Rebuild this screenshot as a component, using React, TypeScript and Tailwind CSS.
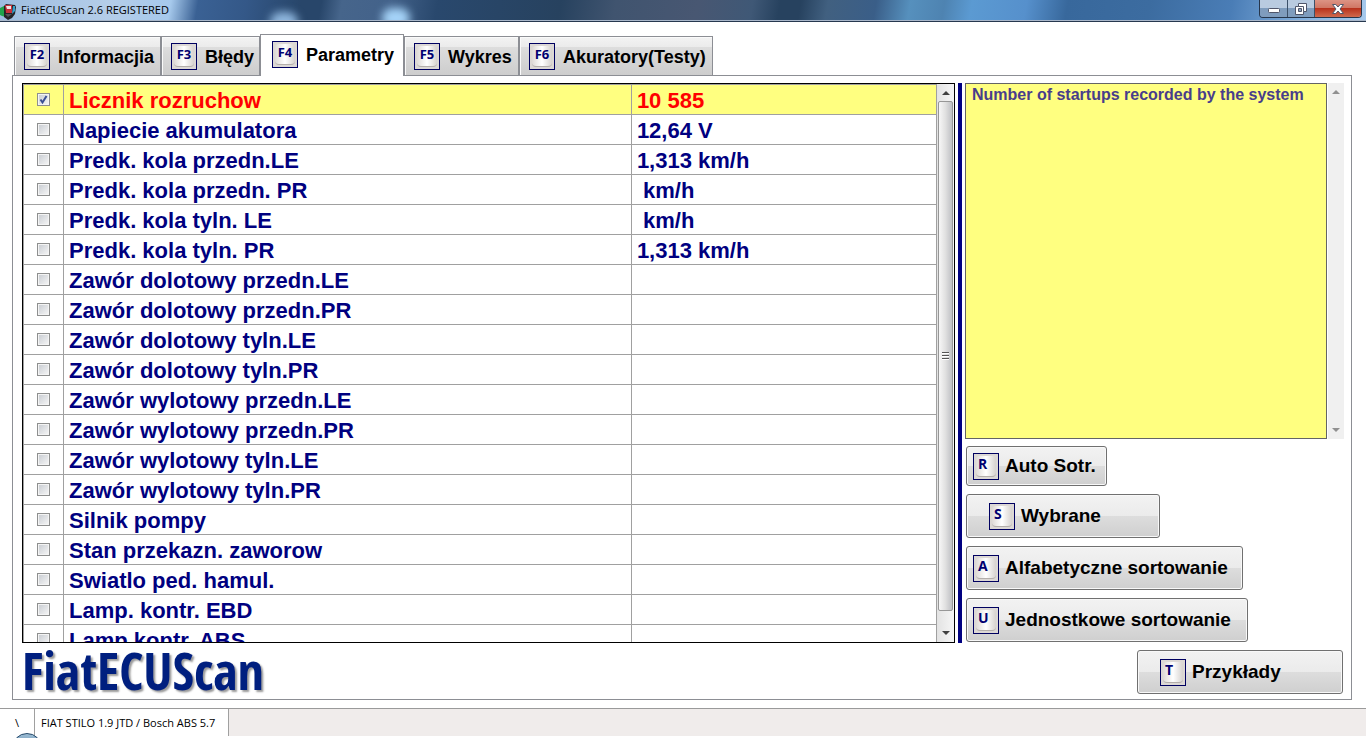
import { useState } from 'react'
import clsx from 'clsx'

const tabs = [
  { key: 'F2', label: 'Informacjia', width: 'w-[147px]' },
  { key: 'F3', label: 'Błędy', width: 'w-[99px]' },
  { key: 'F4', label: 'Parametry', width: 'w-[144px]' },
  { key: 'F5', label: 'Wykres', width: 'w-[115px]' },
  { key: 'F6', label: 'Akuratory(Testy)', width: 'w-[194px]' },
]

const parameters = [
  { name: 'Licznik rozruchow', value: '10 585' },
  { name: 'Napiecie akumulatora', value: '12,64 V' },
  { name: 'Predk. kola przedn.LE', value: '1,313 km/h' },
  { name: 'Predk. kola przedn. PR', value: ' km/h' },
  { name: 'Predk. kola tyln. LE', value: ' km/h' },
  { name: 'Predk. kola tyln. PR', value: '1,313 km/h' },
  { name: 'Zawór dolotowy przedn.LE', value: '' },
  { name: 'Zawór dolotowy przedn.PR', value: '' },
  { name: 'Zawór dolotowy tyln.LE', value: '' },
  { name: 'Zawór dolotowy tyln.PR', value: '' },
  { name: 'Zawór wylotowy przedn.LE', value: '' },
  { name: 'Zawór wylotowy przedn.PR', value: '' },
  { name: 'Zawór wylotowy tyln.LE', value: '' },
  { name: 'Zawór wylotowy tyln.PR', value: '' },
  { name: 'Silnik pompy', value: '' },
  { name: 'Stan przekazn. zaworow', value: '' },
  { name: 'Swiatlo ped. hamul.', value: '' },
  { name: 'Lamp. kontr. EBD', value: '' },
  { name: 'Lamp kontr. ABS', value: '' },
]

const sortButtons = [
  { key: 'R', label: 'Auto Sotr.', size: 'h-10 w-[141px] pl-1.5' },
  { key: 'S', label: 'Wybrane', size: 'h-11 w-[194px] pl-[22px]' },
  { key: 'A', label: 'Alfabetyczne sortowanie', size: 'h-11 w-[277px] pl-1.5' },
  { key: 'U', label: 'Jednostkowe sortowanie', size: 'h-11 w-[282px] pl-1.5' },
]

function KeyCap({ children }: { children: string }) {
  return (
    <span className="flex h-[27px] w-[26px] shrink-0 border border-[#000060] bg-[#dcd8d5] p-0.5">
      <span
        className={clsx(
          'flex-1 rounded-sm border-b border-[#b3aeab] bg-linear-to-r from-[#dedad7] via-white to-[#d6d2cf] font-["Open_Sans",sans-serif] font-bold leading-4 text-[#000070]',
          children.length > 1 ? 'text-center text-[13px]' : 'pl-0.5 text-left text-sm'
        )}
      >
        {children}
      </span>
    </span>
  )
}

function KeyButton({ hotkey, label, size }: { hotkey: string; label: string; size: string }) {
  return (
    <button
      type="button"
      className={clsx(
        'flex shrink-0 items-center gap-1.5 whitespace-nowrap rounded-[3px] border border-[#707070] bg-[linear-gradient(#f2f2f2,#ebebeb_50%,#dddddd_50%,#cfcfcf)] text-[19px] font-bold text-black shadow-[inset_0_0_0_1px_#f8f8f8]',
        size
      )}
    >
      <KeyCap>{hotkey}</KeyCap>
      {label}
    </button>
  )
}

function Arrow({ up, muted }: { up?: boolean; muted?: boolean }) {
  return (
    <svg width="8" height="4" viewBox="0 0 8 4" className="shrink-0" aria-hidden="true">
      <path d={up ? 'M0 4 4 0 8 4Z' : 'M0 0 4 4 8 0Z'} fill={muted ? '#909090' : '#404040'} />
    </svg>
  )
}

function AppIcon() {
  return (
    <svg width="17" height="18" viewBox="0 0 17 18" aria-hidden="true">
      <path d="M0 6 4 4 7 9 6 15 2 14 0 13Z" fill="#1fa34c" />
      <path d="M4 4 6 2 15 3 16 5 15 12 12 16 8 18 4 15Z" fill="#252429" />
      <path d="M5 3 12 3 12 11 6 11Z" fill="#c8303a" />
      <path d="M6 4 11 4 11 7 7 7Z" fill="#eee5e5" />
      <path d="M13 4 15 4 15 9 12 12Z" fill="#35a0cc" />
      <path d="M5 12 12 12 8 15Z" fill="#55555c" />
    </svg>
  )
}

function TitleBar() {
  return (
    <header className="relative flex h-[22px] shrink-0 justify-between overflow-hidden border-b border-[#27384f]">
      {/* Blurred desktop behind the glass */}
      <div className="absolute inset-0 bg-[linear-gradient(100deg,#9dbde0_0%,#b4cde8_8%,#a6c9ec_12.5%,#3a6194_14.5%,#345888_18%,#28466a_22%,#28466a_23.5%,#46658b_25%,#43628a_28.5%,#29486d_32%,#27425f_41%,#40546f_45%,#485772_51%,#3f5876_55%,#27425f_57%,#27425f_58.5%,#416080_60.5%,#3a5e88_64%,#5690bd_66.5%,#4e83b1_69%,#5b9ad2_71%,#5690cc_75%,#38689c_78%,#3c6ca0_84%,#4a7db6_90%,#89b5e2_96%,#a7c9ec_100%)]" />
      <div className="absolute top-3 left-[270px] h-5 w-7 rounded-full bg-[#8eb6dd] blur-xs" />
      <div className="absolute top-2 left-[382px] h-5 w-7 rounded-full bg-[#a5d3f8] blur-xs" />
      <div className="absolute inset-x-0 bottom-0 h-px bg-[#a9b7ca]" />

      <div className="relative flex items-center gap-1">
        <AppIcon />
        <h1 className='font-["Open_Sans",sans-serif] text-[11px] text-black'>FiatECUScan 2.6 REGISTERED</h1>
      </div>

      <div className="relative mr-1 flex h-[18px] overflow-hidden rounded-b border border-t-0 border-[#26364c]">
        <button
          type="button"
          aria-label="Minimize"
          className="flex w-7 items-center justify-center border-r border-[#3b5069] bg-linear-to-b from-[#b9cbe0] from-50% to-[#7f9cbd] to-50%"
        >
          <svg width="12" height="6" viewBox="0 0 12 6" className="mt-1" aria-hidden="true">
            <rect x=".5" y=".5" width="11" height="4" rx="1" fill="#fff" stroke="#50566a" />
          </svg>
        </button>
        <button
          type="button"
          aria-label="Restore"
          className="flex w-[27px] items-center justify-center border-r border-[#3b5069] bg-linear-to-b from-[#b9cbe0] from-50% to-[#7f9cbd] to-50%"
        >
          <svg width="12" height="12" viewBox="0 0 12 12" fill="none" aria-hidden="true">
            <path d="M3.5.5h8v8h-3v3h-8v-8h3z" fill="#fff" stroke="#50566a" />
            <path d="M3.5 3.5h5v5" stroke="#50566a" />
            <path d="M3.5 5.5h3v3h-3z" fill="#8fa5c0" stroke="#50566a" />
          </svg>
        </button>
        <button
          type="button"
          aria-label="Close"
          className="flex w-[46px] items-center justify-center bg-[linear-gradient(#dc9384,#cf7462_50%,#b8321d_50%,#cf6a4e)]"
        >
          <svg width="12" height="10" viewBox="0 0 12 10" aria-hidden="true">
            <path d="M.5.5h3.3L6 3 8.2.5h3.3L8 5l3.5 4.5H8.2L6 7 3.8 9.5H.5L4 5z" fill="#fff" stroke="#50566a" />
          </svg>
        </button>
      </div>
    </header>
  )
}

function ParameterTable() {
  const [checked, setChecked] = useState([0])

  const toggle = (i: number) =>
    setChecked((prev) => (prev.includes(i) ? prev.filter((n) => n !== i) : [...prev, i]))

  return (
    <div className="flex min-w-0 flex-1 overflow-hidden border border-black">
      <div className="min-w-0 flex-1 overflow-hidden">
        <table className="w-full table-fixed border-collapse text-[22px] leading-[27px] font-bold text-[#000080]">
          <colgroup>
            <col className="w-10" />
            <col className="w-[62.2%]" />
            <col />
          </colgroup>
          <tbody>
            {parameters.map((p, i) => (
              <tr
                key={p.name}
                className={clsx('h-[30px]', i === 0 && 'bg-[#ffff80] text-[#ff0000]')}
              >
                <td className="border border-[#a0a0a0] p-0">
                  <span className="relative mx-auto block size-[13px]">
                    <input
                      type="checkbox"
                      id={`param-${i}`}
                      checked={checked.includes(i)}
                      onChange={() => toggle(i)}
                      className="peer block size-[13px] appearance-none border border-[#8e8f8f] bg-linear-to-br from-[#c6cad0] to-[#f8f8f8] shadow-[inset_0_0_0_1px_#f4f4f4]"
                    />
                    <svg
                      viewBox="0 0 13 13"
                      className="pointer-events-none invisible absolute inset-0 size-[13px] peer-checked:visible"
                      aria-hidden="true"
                    >
                      <path d="M3.5 6.5 5.5 9.5 9.5 3" fill="none" stroke="#3a4f94" strokeWidth="2" />
                    </svg>
                  </span>
                </td>
                <td className="border border-[#a0a0a0] p-0 pt-0.5 pl-[5px]">
                  <label htmlFor={`param-${i}`} className="block whitespace-nowrap">{p.name}</label>
                </td>
                <td className="border border-[#a0a0a0] p-0 pt-0.5 pl-[5px] whitespace-pre">{p.value}</td>
              </tr>
            ))}
          </tbody>
        </table>
      </div>

      {/* Scrollbar */}
      <div className="flex w-[17px] shrink-0 flex-col items-center bg-linear-to-r from-[#e3e3e3] to-[#f6f6f6]">
        <div className="flex h-[17px] items-center"><Arrow up /></div>
        <div className="flex w-[15px] flex-1 flex-col items-center justify-center gap-px rounded-xs border border-[#979797] bg-linear-to-r from-[#f7f7f7] via-[#e0e0e0] to-[#bfc0c4]">
          <span className="h-0.5 w-[7px] border-t border-[#555] bg-white" />
          <span className="h-0.5 w-[7px] border-t border-[#555] bg-white" />
          <span className="h-0.5 w-[7px] border-t border-[#555] bg-white" />
        </div>
        <div className="flex h-[31px] items-end pb-[7px]"><Arrow /></div>
      </div>
    </div>
  )
}

function SidePanel() {
  return (
    <aside className="flex w-[379px] shrink-0 flex-col gap-2 pb-px">
      <div className="-mb-px flex min-h-0 flex-1">
        <textarea
          readOnly
          aria-label="Description"
          value="Number of startups recorded by the system"
          className="min-w-0 flex-1 resize-none overflow-hidden border border-[#646464] bg-[#ffff80] px-1.5 py-0.5 text-base leading-[18px] font-bold text-[#483d8b]"
        />
        <div className="ml-px flex w-4 flex-col items-center justify-between bg-[#f0f0f0] py-[7px]">
          <Arrow up muted />
          <Arrow muted />
        </div>
      </div>
      {sortButtons.map((b) => (
        <div key={b.key} className="flex pl-px">
          <KeyButton hotkey={b.key} label={b.label} size={b.size} />
        </div>
      ))}
    </aside>
  )
}

export default function App() {
  const [active, setActive] = useState('F4')

  return (
    <div className='flex h-screen flex-col overflow-hidden bg-white font-["Liberation_Sans",Arial,sans-serif]'>
      <TitleBar />

      <nav className="relative mt-3 flex h-[41px] shrink-0 items-end pl-3.5" role="tablist">
        {tabs.map((tab) => (
          <button
            key={tab.key}
            type="button"
            role="tab"
            aria-selected={active === tab.key}
            onClick={() => setActive(tab.key)}
            className={clsx(
              'flex shrink-0 items-center gap-2 border border-b-0 border-[#8c8e94] text-lg font-bold whitespace-nowrap text-black',
              tab.width,
              active === tab.key
                ? '-mb-px h-[42px] bg-white pb-0.5 pl-[11px]'
                : 'h-[39px] bg-[linear-gradient(#f3f3f3,#ebebeb_27%,#dddddd_27%,#cdcdcd)] pt-px pl-[9px] shadow-[inset_1px_1px_0_#fafafa]'
            )}
          >
            <KeyCap>{tab.key}</KeyCap>
            {tab.label}
          </button>
        ))}
      </nav>

      <main className="mr-3.5 mb-2 ml-3 flex min-h-0 flex-1 flex-col border border-[#8c8e94] pt-[7px] pr-[7px] pb-[5px] pl-[9px]">
        <div className="flex min-h-0 flex-1 gap-[3px]">
          <ParameterTable />
          <div className="w-1 shrink-0 bg-[#000080]" />
          <SidePanel />
        </div>
        <div className="mt-[7px] flex shrink-0 items-start justify-between pr-px">
          <div className='font-["Open_Sans_Condensed","Liberation_Sans_Narrow","Liberation_Sans",sans-serif] text-[52px] leading-10 font-bold text-[#001f7f] [text-shadow:2px_2px_2px_#9a9a9a]'>
            FiatECUScan
          </div>
          <KeyButton hotkey="T" label="Przykłady" size="h-11 w-[206px] pl-[22px]" />
        </div>
      </main>

      <footer className='relative flex h-[30px] shrink-0 overflow-hidden border-t border-[#9a9a9a] bg-[#f0eceb] font-["Open_Sans",sans-serif] text-[11px] text-black'>
        <div className="flex w-[35px] items-center justify-center border-r border-[#a0a0a0] bg-white">{'\\'}</div>
        <div className="flex w-[194px] items-center border-r border-[#a0a0a0] bg-white pl-1.5 whitespace-nowrap">
          FIAT STILO 1.9 JTD / Bosch ABS 5.7
        </div>
        <div className="absolute inset-x-0 bottom-0 h-0.5 bg-white" />
        <div className="absolute top-6 left-3 size-[30px] rounded-full border border-[#24486a] bg-linear-to-b from-[#9dbdd4] to-[#2c5f8d]" />
      </footer>
    </div>
  )
}
